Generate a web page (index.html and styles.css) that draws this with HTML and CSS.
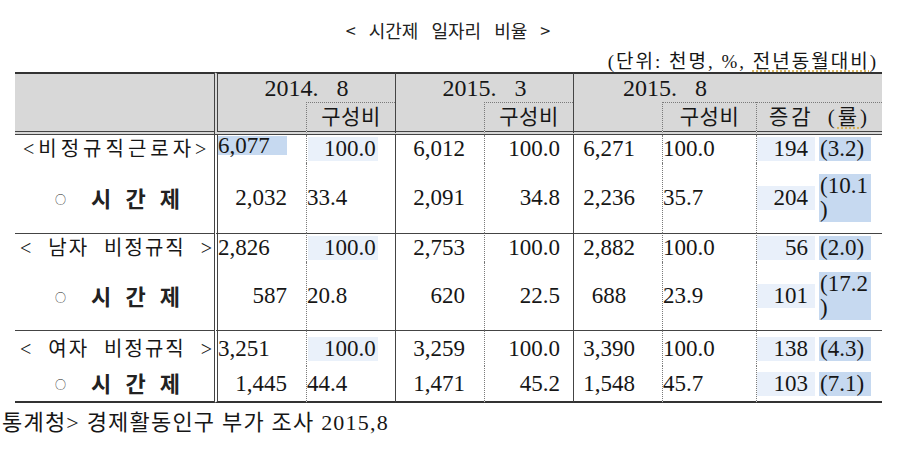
FILE: index.html
```html
<!DOCTYPE html>
<html lang="ko">
<head>
<meta charset="utf-8">
<title>시간제 일자리 비율</title>
<link rel="stylesheet" href="styles.css">
</head>
<body>
<div class="page">
  <h1 class="title">&lt; 시간제 일자리 비율 &gt;</h1>
  <p class="unit">(단위: 천명, %, <span class="spell">전년동월대비</span>)</p>
  <table class="stats">
    <colgroup>
      <col class="w0"><col class="w1"><col class="w2"><col class="w3"><col class="w4"><col class="w5"><col class="w6"><col class="w7"><col class="w8">
    </colgroup>
    <thead>
      <tr class="h1">
        <th rowspan="2" class="lab"></th>
        <th colspan="2" class="c1 yr">2014. 8</th>
        <th colspan="2" class="c3 yr">2015. 3</th>
        <th colspan="2" class="c5 yr">2015. 8</th>
        <th colspan="2" class="c7 nob"></th>
      </tr>
      <tr class="h2">
        <th class="c1"></th>
        <th class="c2 sub">구성비</th>
        <th class="c3"></th>
        <th class="c4 sub">구성비</th>
        <th class="c5"></th>
        <th class="c6 sub">구성비</th>
        <th colspan="2" class="c7 sub chg-h">증감 (<span class="spell">률</span>)</th>
      </tr>
    </thead>
    <tbody>
      <tr class="ra first">
        <th class="lab"><span class="grp g-a">&lt;비정규직근로자&gt;</span></th>
        <td class="c1 la"><span class="hl-strong">6,077</span></td>
        <td class="c2"><span class="hl-soft">100.0</span></td>
        <td class="c3">6,012</td>
        <td class="c4">100.0</td>
        <td class="c5">6,271</td>
        <td class="c6">100.0</td>
        <td class="c7"><span class="chg">194</span></td>
        <td class="c8"><span class="rate">(3.2)</span></td>
      </tr>
      <tr class="rb g1b">
        <th class="lab"><span class="pt"><span class="o">○</span>시 간 제</span></th>
        <td class="c1">2,032</td>
        <td class="c2">33.4</td>
        <td class="c3">2,091</td>
        <td class="c4">34.8</td>
        <td class="c5">2,236</td>
        <td class="c6">35.7</td>
        <td class="c7"><span class="chg">204</span></td>
        <td class="c8"><span class="rate">(10.1<br>)</span></td>
      </tr>
      <tr class="ra sep g2a">
        <th class="lab"><span class="grp g-b">&lt; 남자 비정규직 &gt;</span></th>
        <td class="c1 la">2,826</td>
        <td class="c2"><span class="hl-soft">100.0</span></td>
        <td class="c3">2,753</td>
        <td class="c4">100.0</td>
        <td class="c5">2,882</td>
        <td class="c6">100.0</td>
        <td class="c7"><span class="chg">56</span></td>
        <td class="c8"><span class="rate">(2.0)</span></td>
      </tr>
      <tr class="rb g2b">
        <th class="lab"><span class="pt"><span class="o">○</span>시 간 제</span></th>
        <td class="c1">587</td>
        <td class="c2">20.8</td>
        <td class="c3">620</td>
        <td class="c4">22.5</td>
        <td class="c5">688</td>
        <td class="c6">23.9</td>
        <td class="c7"><span class="chg">101</span></td>
        <td class="c8"><span class="rate">(17.2<br>)</span></td>
      </tr>
      <tr class="ra sep g3a">
        <th class="lab"><span class="grp g-b">&lt; 여자 비정규직 &gt;</span></th>
        <td class="c1 la">3,251</td>
        <td class="c2"><span class="hl-soft">100.0</span></td>
        <td class="c3">3,259</td>
        <td class="c4">100.0</td>
        <td class="c5">3,390</td>
        <td class="c6">100.0</td>
        <td class="c7"><span class="chg">138</span></td>
        <td class="c8"><span class="rate">(4.3)</span></td>
      </tr>
      <tr class="rb last g3b">
        <th class="lab"><span class="pt"><span class="o">○</span>시 간 제</span></th>
        <td class="c1">1,445</td>
        <td class="c2">44.4</td>
        <td class="c3">1,471</td>
        <td class="c4">45.2</td>
        <td class="c5">1,548</td>
        <td class="c6">45.7</td>
        <td class="c7"><span class="chg">103</span></td>
        <td class="c8"><span class="rate">(7.1)</span></td>
      </tr>
    </tbody>
  </table>
  <p class="src">통계청&gt; 경제활동인구 부가 조사 2015,8</p>
</div>
</body>
</html>
```
FILE: styles.css
```css
* { box-sizing: border-box; }
html, body { margin: 0; padding: 0; background: #ffffff; }
body {
  width: 900px;
  height: 457px;
  overflow: hidden;
  color: #161616;
  font-family: "Liberation Serif", "Noto Sans CJK KR", serif;
}

.title {
  margin: 0;
  padding: 18px 4px 0 0;
  height: 42px;
  font: 400 18px/24px "Noto Sans CJK KR", sans-serif;
  text-align: center;
  word-spacing: 8px;
  color: #222;
}

.unit {
  margin: 0;
  height: 30px;
  padding: 9px 22px 0 0;
  font-size: 19px;
  line-height: 22px;
  letter-spacing: 2px;
  text-align: right;
}

.spell {
  text-decoration: underline dotted #d8b35a;
  text-underline-offset: 3px;
}

.stats {
  margin-left: 15px;
  width: 867px;
  table-layout: fixed;
  border-collapse: separate;
  border-spacing: 0;
  font-size: 23px;
}

.w0 { width: 199px; }
.w1 { width: 92px; }
.w2, .w3, .w4, .w5 { width: 89px; }
.w6 { width: 94px; }
.w7 { width: 61px; }
.w8 { width: 65px; }

.stats th, .stats td {
  padding: 0;
  vertical-align: middle;
  white-space: nowrap;
  font-weight: 400;
  line-height: 24px;
}

/* header */
.stats thead th { background: #d8d8d8; }
.h1 th { border-top: 2px solid #333; height: 30px; }
.h1 .lab { border-bottom: 4px double #444; }
.h2 th { border-bottom: 4px double #444; height: 33px; }
.yr { font-size: 24px; text-align: center; word-spacing: 12px; }
.sub {
  font-size: 21px;
  text-align: center;
  letter-spacing: 0.5px;
  border-top: 1px dotted #7a7a7a;
}
.chg-h { letter-spacing: 3px; word-spacing: 6px; padding-right: 18px; }

/* column borders */
.c1 { border-left: 4px double #444; }
.c2, .c4, .c6, .c7 { border-left: 1px dotted #7a7a7a; }
.c3, .c5 { border-left: 1px solid #444; }
.nob { border-left: 0 !important; }

/* body rows */
tbody .lab { text-align: left; }
.first th, .first td { height: 28px; }
.g1b th, .g1b td { height: 70px; }
.sep th, .sep td { border-top: 1px solid #444; }
.g2a th, .g2a td { height: 29px; }
.g2b th, .g2b td { height: 68px; }
.g3a th, .g3a td { height: 36px; }
.last th, .last td { height: 37px; border-bottom: 2px solid #333; }

tbody .c1 { text-align: right; padding-right: 19px; }
tbody .c1.la { text-align: left; padding-right: 0; }
tbody .c2 { text-align: left; }
tbody .c3 { text-align: right; padding-right: 19px; }
tbody .c4 { text-align: right; padding-right: 13px; }
tbody .c5 { text-align: center; padding-right: 18px; }
tbody .c6 { text-align: left; }
tbody .c7 { text-align: left; }
tbody .c8 { text-align: left; }

.grp {
  display: inline-block;
  font-size: 20px;
  letter-spacing: 4px;
  padding-left: 8px;
}
.g-b { padding-left: 5px; word-spacing: 8px; letter-spacing: 2px; }

.pt {
  display: inline-block;
  padding-left: 40px;
  font-family: "Noto Sans CJK KR", sans-serif;
  font-weight: 700;
  font-size: 22px;
  word-spacing: 8px;
  color: #222;
}
.o {
  display: inline-block;
  font-size: 11px;
  font-weight: 400;
  margin-right: 25px;
  vertical-align: 3px;
}

.hl-strong {
  display: inline-block;
  width: 69px;
  height: 19px;
  line-height: 19px;
  background: #c6d9f0;
  vertical-align: 5px;
}
.hl-soft {
  display: inline-block;
  margin-left: 1px;
  width: 70px;
  padding-left: 16px;
  background: #eaf1fa;
}
.chg {
  display: inline-block;
  width: 58px;
  padding-right: 7px;
  text-align: right;
  background: #e9f0fa;
}
.rate {
  display: inline-block;
  margin-left: 2px;
  width: 52px;
  padding-left: 1px;
  background: #c6d9f0;
  white-space: normal;
}

.src {
  margin: 6px 0 0 0;
  padding-left: 2px;
  font-size: 22px;
  line-height: 28px;
  letter-spacing: 1.2px;
}
```
